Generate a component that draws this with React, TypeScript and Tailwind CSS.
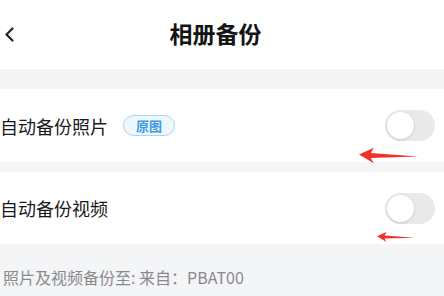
import React from "react";

const Toggle = () => (
  <div className="w-[50px] h-[31px] rounded-full bg-[#e9e9eb] p-[2px] flex items-center">
    <div className="w-[27px] h-[27px] rounded-full bg-white shadow-[0_1px_3px_rgba(0,0,0,0.15)]" />
  </div>
);

const Arrow = ({ className }: { className: string }) => (
  <svg className={className} viewBox="0 0 60 16" fill="#f2312b">
    <polygon points="0,7 15,0 12,5.5 60,9 12,10.5 15,16" />
  </svg>
);

export default function App() {
  return (
    <div className="w-[444px] h-[296px] bg-[#f4f5f7] overflow-hidden font-['Noto_Sans_CJK_SC',sans-serif] relative">
      {/* header */}
      <div className="h-[69px] bg-white flex items-center relative">
        <svg className="absolute left-[4px] top-[27px] w-[11px] h-[15px]" viewBox="0 0 11 15" fill="none" stroke="#222" strokeWidth="2.2" strokeLinecap="round" strokeLinejoin="round">
          <path d="M8.5 1.5 2.5 7.5 8.5 13.5" />
        </svg>
        <h1 className="w-full text-center pr-[13px] pb-[2px] text-[23px] font-bold text-[#141414] leading-none">相册备份</h1>
      </div>
      <div className="h-[20px]" />
      {/* row 1 */}
      <div className="h-[73px] bg-white flex items-center justify-between pr-[9px]">
        <div className="flex items-center gap-[15px]">
          <span className="text-[18px] text-[#1a1a1a] leading-none">自动备份照片</span>
          <span className="h-[21px] w-[52px] rounded-full border border-[#a9d3f0] bg-[#eef7fd] text-[#3a9be0] text-[13px] font-bold flex items-center justify-center leading-none">原图</span>
        </div>
        <Toggle />
      </div>
      <div className="h-[10px]" />
      {/* row 2 */}
      <div className="h-[72px] bg-white flex items-center justify-between pr-[9px]">
        <span className="text-[18px] text-[#1a1a1a] leading-none">自动备份视频</span>
        <Toggle />
      </div>
      {/* footer */}
      <div className="pt-[25px] pl-[3px] text-[16px] text-[#8a8a8e] leading-none">照片及视频备份至: 来自：PBAT00</div>

      <Arrow className="absolute left-[359px] top-[147px] w-[59px] h-[17px]" />
      <Arrow className="absolute left-[377px] top-[231px] w-[38px] h-[12px]" />
    </div>
  );
}
